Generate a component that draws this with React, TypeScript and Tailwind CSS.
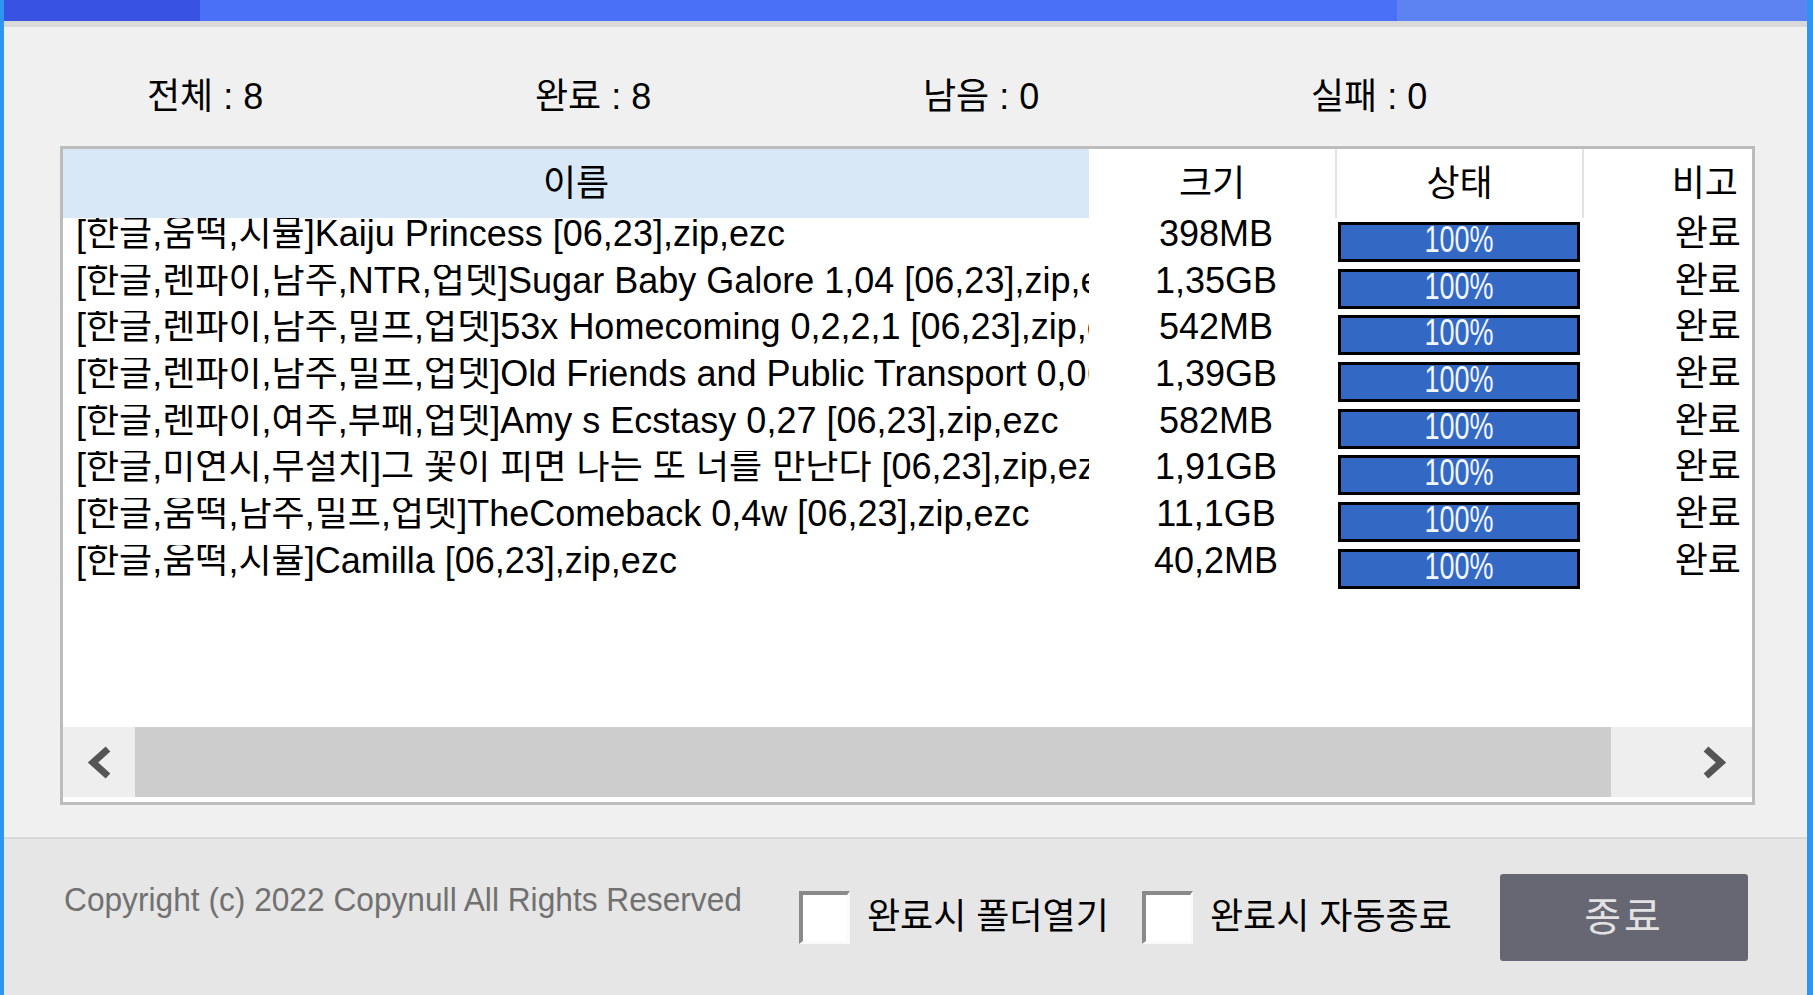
const files = [
  { name: "[한글,움떡,시뮬]Kaiju Princess [06,23],zip,ezc", size: "398MB" },
  { name: "[한글,렌파이,남주,NTR,업뎃]Sugar Baby Galore 1,04 [06,23],zip,ezc", size: "1,35GB" },
  { name: "[한글,렌파이,남주,밀프,업뎃]53x Homecoming 0,2,2,1 [06,23],zip,ezc", size: "542MB" },
  { name: "[한글,렌파이,남주,밀프,업뎃]Old Friends and Public Transport 0,06 [06,23],zip,ezc", size: "1,39GB" },
  { name: "[한글,렌파이,여주,부패,업뎃]Amy s Ecstasy 0,27 [06,23],zip,ezc", size: "582MB" },
  { name: "[한글,미연시,무설치]그 꽃이 피면 나는 또 너를 만난다 [06,23],zip,ezc", size: "1,91GB" },
  { name: "[한글,움떡,남주,밀프,업뎃]TheComeback 0,4w [06,23],zip,ezc", size: "11,1GB" },
  { name: "[한글,움떡,시뮬]Camilla [06,23],zip,ezc", size: "40,2MB" },
];

const stats = [
  { label: "전체", value: 8 },
  { label: "완료", value: 8 },
  { label: "남음", value: 0 },
  { label: "실패", value: 0 },
];

function Chevron({ dir }: { dir: "left" | "right" }) {
  return (
    <svg width="25" height="33" viewBox="0 0 25 33" aria-hidden>
      <polyline
        points={dir === "left" ? "21,3 6,16.5 21,30" : "4,3 19,16.5 4,30"}
        fill="none"
        stroke="#555555"
        strokeWidth="7"
        strokeLinejoin="miter"
      />
    </svg>
  );
}

function Checkbox({ label, width }: { label: string; width: string }) {
  return (
    <div className={`flex items-center ${width}`}>
      <div className="h-[53px] w-[51px] shrink-0 border-t-4 border-l-4 border-r-[3px] border-b-[3px] border-t-[#8a8a8a] border-l-[#8a8a8a] border-r-[#fafafa] border-b-[#fafafa] bg-white" />
      <span className="ml-[17px] whitespace-nowrap text-[36px] leading-[40px] text-black">{label}</span>
    </div>
  );
}

export default function App() {
  return (
    <div className="flex h-[995px] w-[1813px] overflow-hidden bg-[#f0f0f0] font-['Liberation_Sans','Noto_Sans_CJK_KR',sans-serif] text-black">
      <div className="w-[4px] shrink-0 bg-[#2f95f2]" />
      <div className="flex min-w-0 flex-1 flex-col">
        {/* title bar */}
        <div className="flex h-[21px] shrink-0">
          <div className="w-[196px] bg-[#3852e2]" />
          <div className="w-[1197px] bg-[#4a70f7]" />
          <div className="flex-1 bg-[#5d82f1]" />
        </div>
        <div className="h-[6px] shrink-0 bg-[#d9d9d9]" />

        <div className="flex h-[810px] shrink-0 flex-col">
          {/* counters */}
          <div className="mt-[50px] flex h-[40px] pl-[143px]">
            {stats.map((s) => (
              <div key={s.label} className="w-[388px] whitespace-nowrap text-[36px] leading-[40px]">
                {s.label} : {s.value}
              </div>
            ))}
          </div>

          {/* list */}
          <div className="ml-[56px] mt-[29px] flex h-[659px] w-[1695px] flex-col overflow-hidden border-[3px] border-[#bcbcbc] bg-white">
            <div className="flex h-[69px] shrink-0 items-center text-[36px] leading-[40px]">
              <div className="flex h-full w-[1026px] items-center justify-center bg-[#d9e8f6]">이름</div>
              <div className="flex h-full w-[246px] items-center justify-center">크기</div>
              <div className="flex h-full w-[247px] items-center justify-center border-l-2 border-[#e2e2e2]">상태</div>
              <div className="flex h-full flex-1 items-center justify-end border-l-2 border-[#e2e2e2] pr-[14px]">비고</div>
            </div>

            {files.map((f) => (
              <div key={f.name} className="flex h-[46.7px] shrink-0 items-start text-[36px] leading-[32px]">
                <div className="h-full w-[1026px] overflow-hidden whitespace-nowrap pl-[13px]">{f.name}</div>
                <div className="w-[246px] whitespace-nowrap pl-[8px] text-center">{f.size}</div>
                <div className="w-[247px] pl-[3px] pt-[4px]">
                  <div className="flex h-[40px] w-[242px] justify-center border-[3px] border-black bg-[#3369c4] text-[36px] leading-[30px] text-[#f2f6ff]">
                    <span className="inline-block scale-x-[0.75]">100%</span>
                  </div>
                </div>
                <div className="flex-1 whitespace-nowrap pr-[11px] text-right">완료</div>
              </div>
            ))}

            <div className="flex-1" />

            {/* horizontal scrollbar */}
            <div className="flex h-[70px] shrink-0 bg-[#eeeeee]">
              <div className="flex w-[72px] items-center justify-center">
                <Chevron dir="left" />
              </div>
              <div className="w-[1476px] bg-[#cdcdcd]" />
              <div className="flex-1" />
              <div className="flex w-[76px] items-center justify-center">
                <Chevron dir="right" />
              </div>
            </div>
            <div className="h-[5px] shrink-0 bg-white" />
          </div>
        </div>

        <div className="h-[2px] shrink-0 bg-[#d8d8d8]" />

        {/* footer */}
        <div className="flex flex-1 items-center bg-[#e6e6e6] pl-[60px]">
          <div className="mb-[34px] w-[735px] whitespace-nowrap text-[33px] leading-[36px] text-[#717171]">
            <span className="inline-block origin-left scale-x-[0.96]">Copyright (c) 2022 Copynull All Rights Reserved</span>
          </div>
          <Checkbox label="완료시 폴더열기" width="w-[343px]" />
          <Checkbox label="완료시 자동종료" width="w-[358px]" />
          <button
            type="button"
            className="flex h-[87px] w-[248px] items-center justify-center rounded-[3px] bg-[#676774] text-[40px] leading-[40px] tracking-[3px] text-[#e2e2e2]"
          >
            종료
          </button>
        </div>
      </div>
      <div className="w-[6px] shrink-0 bg-[#2f95f2]" />
    </div>
  );
}
